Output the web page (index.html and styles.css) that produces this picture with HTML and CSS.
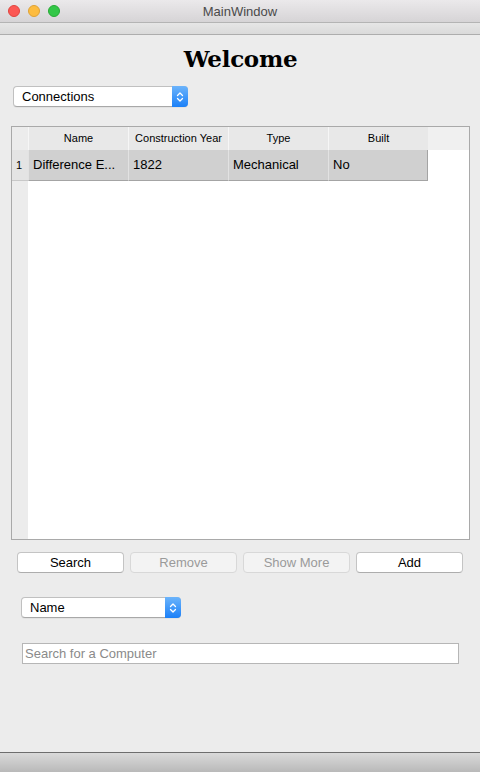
FILE: index.html
```html
<!DOCTYPE html>
<html>
<head>
<meta charset="utf-8">
<link rel="stylesheet" href="styles.css">
</head>
<body>
<div class="window">
  <div class="titlebar">
    <div class="lights">
      <span class="light red"></span>
      <span class="light yellow"></span>
      <span class="light green"></span>
    </div>
    <div class="title">MainWindow</div>
  </div>
  <div class="toolbar"></div>
  <div class="main">
    <h1 class="welcome">Welcome</h1>
    <div class="combo combo-conn">
      <span class="combo-text">Connections</span>
      <span class="combo-arrow"><svg width="8" height="12" viewBox="0 0 8 12"><path d="M1.5 4.5 L4 2 L6.5 4.5 M1.5 7.5 L4 10 L6.5 7.5" fill="none" stroke="#fff" stroke-width="1.3" stroke-linecap="round" stroke-linejoin="round"/></svg></span>
    </div>
    <div class="table">
      <div class="corner"></div>
      <div class="hcell">Name</div>
      <div class="hcell">Construction Year</div>
      <div class="hcell">Type</div>
      <div class="hcell">Built</div>
      <div class="hfill"></div>
      <div class="vcell">1</div>
      <div class="cell">Difference E...</div>
      <div class="cell">1822</div>
      <div class="cell">Mechanical</div>
      <div class="cell last">No</div>
      <div class="bfill"></div>
      <div class="vfill"></div>
      <div class="body"></div>
    </div>
    <div class="buttons">
      <button class="btn">Search</button>
      <button class="btn disabled">Remove</button>
      <button class="btn disabled">Show More</button>
      <button class="btn">Add</button>
    </div>
    <div class="combo combo-name">
      <span class="combo-text">Name</span>
      <span class="combo-arrow"><svg width="8" height="12" viewBox="0 0 8 12"><path d="M1.5 4.5 L4 2 L6.5 4.5 M1.5 7.5 L4 10 L6.5 7.5" fill="none" stroke="#fff" stroke-width="1.3" stroke-linecap="round" stroke-linejoin="round"/></svg></span>
    </div>
    <input class="search" type="text" placeholder="Search for a Computer">
  </div>
  <div class="statusbar"></div>
</div>
</body>
</html>
```
FILE: styles.css
```css
html, body {
  margin: 0;
  padding: 0;
}
body {
  width: 480px;
  height: 772px;
  overflow: hidden;
  font-family: "Liberation Sans", Arial, sans-serif;
  font-size: 13px;
  color: #000;
  background: #ececec;
}
.window {
  display: flex;
  flex-direction: column;
  height: 772px;
}
.titlebar {
  height: 22px;
  display: flex;
  align-items: center;
  justify-content: center;
  position: relative;
  background: linear-gradient(#ebe9eb, #d6d4d6);
  border-bottom: 1px solid #b4b4b4;
}
.lights {
  position: absolute;
  left: 8px;
  top: 5px;
  display: flex;
  gap: 8px;
}
.light {
  width: 12px;
  height: 12px;
  border-radius: 50%;
  box-sizing: border-box;
}
.red { background: #fc5753; border: 1px solid #e0443e; }
.yellow { background: #fdbc40; border: 1px solid #dea236; }
.green { background: #33c748; border: 1px solid #27aa35; }
.title {
  font-size: 13px;
  color: #4a4a4a;
  font-family: "Liberation Sans", Arial, sans-serif;
}
.toolbar {
  height: 11px;
  background: linear-gradient(#e6e6e6, #dadada);
  border-bottom: 1px solid #adadad;
}
.main {
  flex: 1;
  display: flex;
  flex-direction: column;
  padding: 0 10px 0 11px;
}
.welcome {
  margin: 9px 0 0 0;
  height: 30px;
  line-height: 30px;
  text-align: center;
  font-family: "DejaVu Serif", Georgia, serif;
  font-weight: bold;
  font-size: 23px;
  letter-spacing: -0.3px;
}
.combo {
  display: flex;
  align-items: stretch;
  height: 21px;
  box-sizing: border-box;
  background: #fff;
  border: 1px solid #c0c0c0;
  border-bottom-color: #a8a8a8;
  border-radius: 4px;
  box-shadow: 0 1px 0 rgba(0,0,0,0.04);
}
.combo-conn {
  margin: 12px 0 0 2px;
  width: 175px;
}
.combo-name {
  margin: 24px 0 0 10px;
  width: 160px;
}
.combo-text {
  flex: 1;
  padding-left: 8px;
  line-height: 19px;
  font-size: 13px;
}
.combo-arrow {
  width: 16px;
  margin: -1px -1px -1px 0;
  border-radius: 0 4px 4px 0;
  background: linear-gradient(#6cb4fb, #1b80f8);
  display: flex;
  align-items: center;
  justify-content: center;
}
.table {
  margin-top: 19px;
  height: 414px;
  box-sizing: border-box;
  border: 1px solid #a9a9a9;
  background: #fff;
  display: grid;
  grid-template-columns: 16px 100px 100px 100px 100px 1fr;
  grid-template-rows: 23px 31px 1fr;
}
.corner {
  background: #ececec;
}
.hcell {
  background: #e8e8e8;
  border-left: 1px solid #f6f6f6;
  font-size: 11px;
  text-align: center;
  line-height: 23px;
  white-space: nowrap;
  overflow: hidden;
}
.hfill {
  background: #f0f0f0;
}
.vcell {
  background: #e4e4e4;
  font-size: 11px;
  padding-left: 4px;
  line-height: 30px;
  border-bottom: 1px solid #c8c8c8;
}
.cell {
  background: #d0d0d0;
  border-left: 1px solid #e2e2e2;
  border-bottom: 1px solid #a4a4a4;
  padding-left: 4px;
  line-height: 30px;
  font-size: 13px;
  white-space: nowrap;
  overflow: hidden;
}
.cell.last {
  border-right: 1px solid #a4a4a4;
}
.bfill {
  background: #fff;
}
.vfill {
  background: #ececec;
}
.body {
  grid-column: 2 / 7;
  background: #fff;
}
.buttons {
  margin-top: 12px;
  display: flex;
  gap: 6px;
  padding-left: 6px;
}
.btn {
  width: 107px;
  height: 21px;
  box-sizing: border-box;
  background: #fff;
  border: 1px solid #c4c4c4;
  border-bottom-color: #adadad;
  border-radius: 4px;
  font-family: "Liberation Sans", Arial, sans-serif;
  font-size: 13px;
  color: #000;
  padding: 0;
}
.btn.disabled {
  background: #f3f3f3;
  border-color: #d8d8d8;
  color: #9a9a9a;
}
.search {
  margin: 25px 0 0 11px;
  width: 437px;
  height: 21px;
  box-sizing: border-box;
  border: 1px solid #b6b6b6;
  background: #fff;
  padding: 0 0 0 2px;
  font-family: "Liberation Sans", Arial, sans-serif;
  font-size: 13px;
  outline: none;
}
.search::placeholder {
  color: #8a8a8a;
}
.statusbar {
  height: 19px;
  border-top: 1px solid #6e6e6e;
  background: linear-gradient(#dadada, #b9b9b9);
}
```
